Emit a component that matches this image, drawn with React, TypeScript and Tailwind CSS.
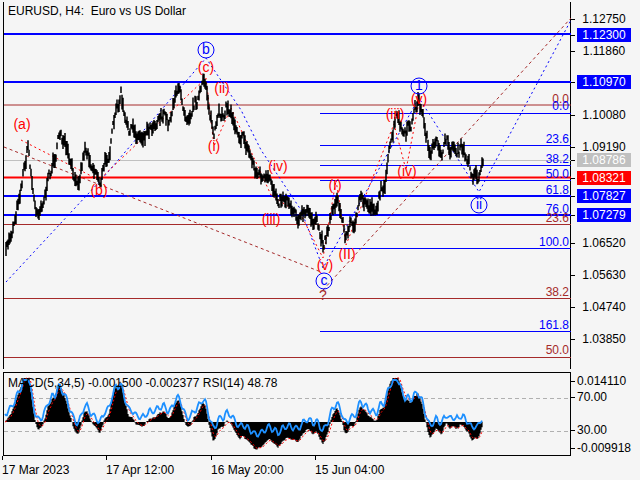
import React from 'react'

const FONT = { fontFamily: '"Liberation Sans", Arial, sans-serif' }

// deterministic pseudo random
function rng(seed: number) {
  let s = seed
  return () => {
    s = (s * 16807) % 2147483647
    return (s - 1) / 2147483646
  }
}

// rough price path (page coords: x, y)
const WAYPOINTS: [number, number][] = [
  [5, 255], [12, 225], [27, 145], [35, 215], [48, 180], [60, 130], [68, 165], [75, 190], [84, 145],
  [100, 180], [110, 140], [120, 95], [125, 130], [140, 135], [160, 110], [168, 125], [175, 85],
  [185, 110], [205, 85], [213, 135], [225, 105], [240, 130], [255, 170], [270, 190], [285, 195],
  [300, 215], [312, 218], [322, 245], [335, 195], [345, 235], [360, 205], [375, 205], [385, 175],
  [395, 120], [405, 140], [418, 100], [430, 155], [445, 145], [460, 150], [470, 170], [478, 175], [482, 158],
]

function buildBars() {
  const r = rng(7)
  const bars: { x: number; hi: number; lo: number }[] = []
  let noise = 0
  for (let x = 5; x <= 482; x += 1) {
    let i = 0
    while (i < WAYPOINTS.length - 2 && WAYPOINTS[i + 1][0] < x) i++
    const [x0, y0] = WAYPOINTS[i]
    const [x1, y1] = WAYPOINTS[i + 1]
    const t = Math.min(1, Math.max(0, (x - x0) / (x1 - x0)))
    noise = noise * 0.7 + (r() - 0.5) * 12
    const mid = y0 + (y1 - y0) * t + noise
    const h = 4 + r() * 11
    bars.push({ x, hi: mid - h / 2, lo: mid + h / 2 })
  }
  return bars
}

const BARS = buildBars()

function series() {
  const mids = BARS.map(b => (b.hi + b.lo) / 2)
  const ema = (arr: number[], n: number) => {
    const k = 2 / (n + 1)
    const out: number[] = []
    arr.forEach((v, i) => out.push(i === 0 ? v : v * k + out[i - 1] * (1 - k)))
    return out
  }
  const fast = ema(mids, 5)
  const slow = ema(mids, 34)
  const macd = fast.map((f, i) => (slow[i] - f) * 1.3)
  const sig = ema(macd, 5)
  return { macd, sig }
}

const { macd, sig } = series()
const ZERO = 422

function FibLabel({ y, text, color }: { y: number; text: string; color: string }) {
  return (
    <text x={568} y={y - 2} textAnchor="end" fontSize={12} fill={color} style={FONT}>
      {text}
    </text>
  )
}

const AXIS: { y: number; text: string; bg?: string; fg?: string }[] = [
  { y: 19, text: '1.12750' },
  { y: 51, text: '1.11860' },
  { y: 115, text: '1.10080' },
  { y: 147, text: '1.09190' },
  { y: 243, text: '1.06520' },
  { y: 275, text: '1.05630' },
  { y: 307, text: '1.04740' },
  { y: 339, text: '1.03850' },
  { y: 35, text: '1.12300', bg: 'bg-[#0000ff]', fg: 'text-white' },
  { y: 82, text: '1.10970', bg: 'bg-[#0000ff]', fg: 'text-white' },
  { y: 160, text: '1.08786', bg: 'bg-[#c0c0c0]', fg: 'text-white' },
  { y: 178, text: '1.08321', bg: 'bg-[#ff0000]', fg: 'text-white' },
  { y: 196, text: '1.07827', bg: 'bg-[#0000ff]', fg: 'text-white' },
  { y: 215, text: '1.07279', bg: 'bg-[#0000ff]', fg: 'text-white' },
]

function WaveLabel({ x, y, t, c, circle }: { x: number; y: number; t: string; c: string; circle?: boolean }) {
  return (
    <g>
      {circle && <circle cx={x} cy={y - 4} r={8} fill="none" stroke={c} strokeWidth={1} />}
      <text x={x} y={y} textAnchor="middle" fontSize={14} fill={c} style={FONT}>
        {t}
      </text>
    </g>
  )
}

export default function App() {
  const blue = '#0000ff'
  const red = '#ff0000'
  const brown = '#a52a2a'
  const barPath = BARS.map(b => `M${b.x} ${b.hi.toFixed(1)}V${b.lo.toFixed(1)}`).join('')
  const hist = macd.map((m, i) => `M${BARS[i].x} ${ZERO}V${Math.max(378, Math.min(452, ZERO - m * 0.8)).toFixed(1)}`).join('')
  const sigLine = sig.map((s, i) => `${BARS[i].x},${Math.max(378, Math.min(452, ZERO - s * 0.8)).toFixed(1)}`).join(' ')
  const rsiLine = macd
    .map((m, i) => `${BARS[i].x},${Math.max(380, Math.min(445, ZERO - 8 - m * 0.6 + Math.sin(i * 0.9) * 3)).toFixed(1)}`)
    .join(' ')

  return (
    <div className="relative w-[640px] h-[480px] overflow-hidden bg-[#f5f5f5] text-black" style={FONT}>
      {/* main pane */}
      <div className="flex pt-[2px]">
        <div className="ml-[3px] w-[568px] h-[367px] border-x border-black relative">
          <svg width={567} height={367} viewBox="3 2 567 367" className="block">
            {/* full width levels */}
            <line x1={3} x2={570} y1={34} y2={34} stroke={blue} strokeWidth={2} />
            <line x1={3} x2={570} y1={82} y2={82} stroke={blue} strokeWidth={2} />
            <line x1={3} x2={570} y1={105} y2={105} stroke={brown} strokeWidth={1} />
            <line x1={3} x2={570} y1={160.5} y2={160.5} stroke="#c0c0c0" strokeWidth={1} />
            <line x1={3} x2={570} y1={177.5} y2={177.5} stroke={red} strokeWidth={2} />
            <line x1={3} x2={570} y1={196} y2={196} stroke={blue} strokeWidth={2} />
            <line x1={3} x2={570} y1={215} y2={215} stroke={blue} strokeWidth={2} />
            <line x1={3} x2={570} y1={224.5} y2={224.5} stroke={brown} strokeWidth={1} />
            <line x1={3} x2={570} y1={298.5} y2={298.5} stroke={brown} strokeWidth={1} />
            <line x1={3} x2={570} y1={357.5} y2={357.5} stroke={brown} strokeWidth={1} />
            {/* fib from wave */}
            {[113.5, 145.5, 165.5, 180.5, 248.5, 331.5].map(y => (
              <line key={y} x1={319} x2={570} y1={y} y2={y} stroke={blue} strokeWidth={1} />
            ))}
            <FibLabel y={105} text="0.0" color={brown} />
            <FibLabel y={112} text="0.0" color={blue} />
            <FibLabel y={145} text="23.6" color={blue} />
            <FibLabel y={165} text="38.2" color={blue} />
            <FibLabel y={180} text="50.0" color={blue} />
            <FibLabel y={196} text="61.8" color={blue} />
            <FibLabel y={215} text="76.0" color={blue} />
            <FibLabel y={224} text="23.6" color={brown} />
            <FibLabel y={248} text="100.0" color={blue} />
            <FibLabel y={298} text="38.2" color={brown} />
            <FibLabel y={331} text="161.8" color={blue} />
            <FibLabel y={356} text="50.0" color={brown} />

            {/* dotted wave lines */}
            <polyline points="3,147 320,272" fill="none" stroke={brown} strokeDasharray="3 3" />
            <polyline points="322,290 570,18" fill="none" stroke={brown} strokeDasharray="3 3" />
            <polyline points="5,282 100,180 205,58 240,110 260,150 300,210 322,268 418,98 478,192 570,20" fill="none" stroke={blue} strokeDasharray="2 3" />
            <polyline points="20,140 98,180 205,78 213,146 230,108 270,195 300,215 322,258 335,180 345,245 393,124 405,170 418,102" fill="none" stroke={red} strokeDasharray="2 3" />

            {/* price bars */}
            <path d={barPath} stroke="#000" strokeWidth={1.5} fill="none" />

            {/* wave labels */}
            <WaveLabel x={21} y={129} t="(a)" c={red} />
            <WaveLabel x={98} y={195} t="(b)" c={red} />
            <WaveLabel x={205} y={54} t="b" c={blue} circle />
            <WaveLabel x={205} y={72} t="(c)" c={red} />
            <WaveLabel x={221} y={93} t="(ii)" c={red} />
            <WaveLabel x={213} y={151} t="(i)" c={red} />
            <WaveLabel x={277} y={171} t="(iv)" c={red} />
            <WaveLabel x={270} y={224} t="(iii)" c={red} />
            <WaveLabel x={324} y={270} t="(v)" c={red} />
            <WaveLabel x={323} y={285} t="c" c={blue} circle />
            <WaveLabel x={322} y={300} t="?" c={brown} />
            <WaveLabel x={334} y={190} t="(I)" c={red} />
            <WaveLabel x={346} y={259} t="(II)" c={red} />
            <WaveLabel x={394} y={119} t="(iii)" c={red} />
            <WaveLabel x={418} y={104} t="(v)" c={red} />
            <WaveLabel x={418} y={90} t="1" c={blue} circle />
            <WaveLabel x={406} y={176} t="(iv)" c={red} />
            <WaveLabel x={478} y={209} t="ii" c={blue} circle />
          </svg>
          <div className="absolute left-[4px] top-[3px] text-[12px] leading-none">EURUSD, H4:&nbsp; Euro vs US Dollar</div>
        </div>
        <div className="relative flex-1">
          {AXIS.map(a => (
            <div key={a.text} className="absolute left-0 flex items-center" style={{ top: a.y - 2 - 7 }}>
              <div className="w-[4px] h-px bg-black" />
              <div className={`ml-[2px] px-[1px] h-[14px] w-[54px] flex items-center justify-center text-[12px] leading-none ${a.bg ?? ''} ${a.fg ?? ''}`}>
                {a.text}
              </div>
            </div>
          ))}
        </div>
      </div>

      {/* indicator pane */}
      <div className="flex mt-[3px]">
        <div className="ml-[3px] w-[568px] h-[84px] border border-black relative">
          <svg width={566} height={82} viewBox="4 373 566 82" className="block">
            <line x1={4} x2={570} y1={398.5} y2={398.5} stroke="#b0b0b0" strokeDasharray="4 3" />
            <line x1={4} x2={570} y1={431.5} y2={431.5} stroke="#b0b0b0" strokeDasharray="4 3" />
            <path d={hist} stroke="#000" strokeWidth={1.2} fill="none" />
            <polyline points={sigLine} fill="none" stroke={red} strokeDasharray="2 2" />
            <polyline points={rsiLine} fill="none" stroke="#1e90ff" strokeWidth={1.8} />
          </svg>
          <div className="absolute left-[4px] top-[4px] text-[12px] leading-none">MACD(5,34,5) -0.001500 -0.002377 RSI(14) 48.78</div>
        </div>
        <div className="relative flex-1 text-[12px] leading-none">
          {[
            { y: 382, t: '0.014110' },
            { y: 398, t: '70.00' },
            { y: 431, t: '30.00' },
            { y: 449, t: '-0.009918' },
          ].map(a => (
            <div key={a.t} className="absolute left-0 flex items-center" style={{ top: a.y - 373 - 7 }}>
              <div className="w-[4px] h-px bg-black" />
              <div className="ml-[2px] h-[14px] flex items-center">{a.t}</div>
            </div>
          ))}
        </div>
      </div>

      {/* time axis */}
      <div className="relative h-[24px] text-[12px] leading-none">
        {[
          { x: 2, t: '17 Mar 2023' },
          { x: 106, t: '17 Apr 12:00' },
          { x: 211, t: '16 May 20:00' },
          { x: 315, t: '15 Jun 04:00' },
        ].map(d => (
          <div key={d.t} className="absolute top-0" style={{ left: d.x }}>
            <div className="w-px h-[4px] bg-black" />
            <div className="mt-[4px]">{d.t}</div>
          </div>
        ))}
      </div>
    </div>
  )
}
